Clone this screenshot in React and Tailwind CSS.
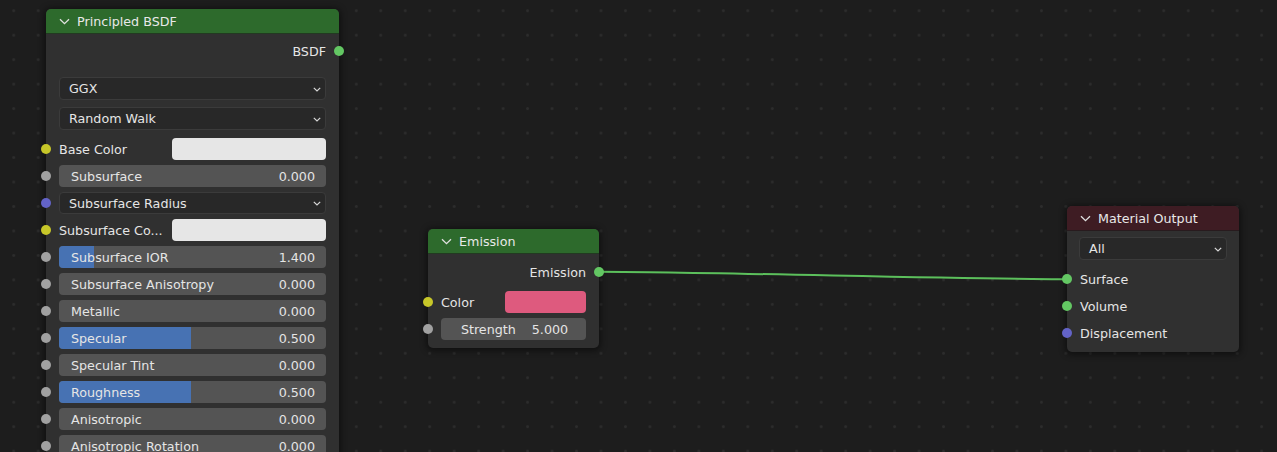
import React from "react";

const SOCK = {
  yellow: "bg-[#c7c729]",
  grey: "bg-[#a1a1a1]",
  purple: "bg-[#6363c7]",
  green: "bg-[#63c763]",
};

function Socket({ color, side }) {
  return (
    <span
      className={`absolute top-1/2 -translate-y-1/2 w-[10px] h-[10px] rounded-full ${SOCK[color]} ${
        side === "right" ? "right-[-18px]" : "left-[-18px]"
      }`}
    />
  );
}

function T({ children, className = "" }) {
  return <span className={`mt-[2px] ${className}`}>{children}</span>;
}

function HeaderChevron() {
  return (
    <svg width="11" height="7" viewBox="0 0 11 7" className="shrink-0 mt-[1px]">
      <path d="M1 1.2 L5.5 5.7 L10 1.2" fill="none" stroke="#e0e0e0" strokeWidth="1.3" />
    </svg>
  );
}

function DropChevron() {
  return (
    <svg width="8" height="5" viewBox="0 0 8 5" className="shrink-0 mt-[1px]">
      <path d="M0.8 0.8 L4 4 L7.2 0.8" fill="none" stroke="#d8d8d8" strokeWidth="1.2" />
    </svg>
  );
}

function Header({ title, color }) {
  return (
    <div
      className={`h-[25px] rounded-t-[5px] border-b border-[#1a1a1a]/60 flex items-center gap-[7px] pl-[13px] ${color}`}
    >
      <HeaderChevron />
      <T className="text-[#e8e8e8]">{title}</T>
    </div>
  );
}

function Dropdown({ label, socket, className = "" }) {
  return (
    <div className={`relative h-[23px] ${className}`}>
      {socket && <Socket color={socket} side="left" />}
      <div className="h-full rounded-[4px] bg-[#282828] border border-[#3b3b3b] flex items-center justify-between pl-[9px] pr-[4px]">
        <T>{label}</T>
        <DropChevron />
      </div>
    </div>
  );
}

function Slider({ label, value, fill, socket = "grey", className = "" }) {
  return (
    <div className={`relative h-[22px] ${className}`}>
      <Socket color={socket} side="left" />
      <div className="relative h-full rounded-[4px] bg-[#545454] overflow-hidden flex items-center justify-between pl-[12px] pr-[11px]">
        {fill && <div className={`absolute inset-y-0 left-0 bg-[#4772b3] ${fill}`} />}
        <T className="relative">{label}</T>
        <T className="relative">{value}</T>
      </div>
    </div>
  );
}

function ColorRow({ label, swatch, swatchW, className = "" }) {
  return (
    <div className={`relative h-[22px] flex items-center justify-between ${className}`}>
      <Socket color="yellow" side="left" />
      <T>{label}</T>
      <div className={`h-[22px] rounded-[4px] ${swatch} ${swatchW}`} />
    </div>
  );
}

function OutRow({ label, className = "" }) {
  return (
    <div className={`relative h-[22px] flex items-center justify-end ${className}`}>
      <T>{label}</T>
      <Socket color="green" side="right" />
    </div>
  );
}

function InRow({ label, socket, className = "" }) {
  return (
    <div className={`relative h-[22px] flex items-center ${className}`}>
      <Socket color={socket} side="left" />
      <T>{label}</T>
    </div>
  );
}

const nodeBase =
  "absolute rounded-[5px] bg-[#303030] shadow-[0_1px_6px_2px_rgba(0,0,0,0.45)]";

export default function App() {
  return (
    <div
      className="relative w-[1277px] h-[452px] overflow-hidden bg-[#1d1d1d] bg-[radial-gradient(circle,#2c2c2c_1.3px,transparent_1.5px)] bg-size-[24.47px_24.47px] bg-position-[1.5px_-1.5px] text-[12.7px] leading-none text-[#e5e5e5] font-['DejaVu_Sans',sans-serif]"
    >
      {/* link */}
      <svg className="absolute inset-0 pointer-events-none" width="1277" height="452">
        <path
          d="M599.3 271.7 C 693 271.7, 973 279.3, 1066.7 279.3"
          fill="none"
          stroke="#5cc05c"
          strokeWidth="2"
        />
      </svg>

      {/* Principled BSDF */}
      <div className={`${nodeBase} left-[46px] top-[9px] w-[293px] h-[460px]`}>
        <Header title="Principled BSDF" color="bg-[#2d6a2c]" />
        <div className="flex flex-col px-[13px] pt-[6px]">
          <OutRow label="BSDF" />
          <Dropdown label="GGX" className="mt-[15px]" />
          <Dropdown label="Random Walk" className="mt-[7px]" />
          <div className="flex flex-col gap-[5px] mt-[8px]">
            <ColorRow label="Base Color" swatch="bg-[#e6e6e6]" swatchW="w-[154px]" />
            <Slider label="Subsurface" value="0.000" />
            <Dropdown label="Subsurface Radius" socket="purple" className="!h-[22px]" />
            <ColorRow label="Subsurface Co..." swatch="bg-[#e6e6e6]" swatchW="w-[154px]" />
            <Slider label="Subsurface IOR" value="1.400" fill="w-[35px]" />
            <Slider label="Subsurface Anisotropy" value="0.000" />
            <Slider label="Metallic" value="0.000" />
            <Slider label="Specular" value="0.500" fill="w-[132px]" />
            <Slider label="Specular Tint" value="0.000" />
            <Slider label="Roughness" value="0.500" fill="w-[132px]" />
            <Slider label="Anisotropic" value="0.000" />
            <Slider label="Anisotropic Rotation" value="0.000" />
          </div>
        </div>
      </div>

      {/* Emission */}
      <div className={`${nodeBase} left-[428px] top-[229px] w-[171px]`}>
        <Header title="Emission" color="bg-[#2d6a2c]" />
        <div className="flex flex-col px-[13px] pt-[7px] pb-[8px]">
          <OutRow label="Emission" />
          <ColorRow label="Color" swatch="bg-[#de5a7e]" swatchW="w-[81px]" className="mt-[8px]" />
          <div className="relative h-[22px] mt-[5px]">
            <Socket color="grey" side="left" />
            <div className="h-full rounded-[4px] bg-[#545454] flex items-center justify-center gap-[16px] pl-[2px]">
              <T>Strength</T>
              <T>5.000</T>
            </div>
          </div>
        </div>
      </div>

      {/* Material Output */}
      <div className={`${nodeBase} left-[1067px] top-[206px] w-[172px]`}>
        <Header title="Material Output" color="bg-[#3e1c23]" />
        <div className="flex flex-col px-[13px] pt-[6px] pb-[8px]">
          <Dropdown label="All" className="-mx-[1px]" />
          <div className="flex flex-col gap-[5px] mt-[8px]">
            <InRow label="Surface" socket="green" />
            <InRow label="Volume" socket="green" />
            <InRow label="Displacement" socket="purple" />
          </div>
        </div>
      </div>
    </div>
  );
}
